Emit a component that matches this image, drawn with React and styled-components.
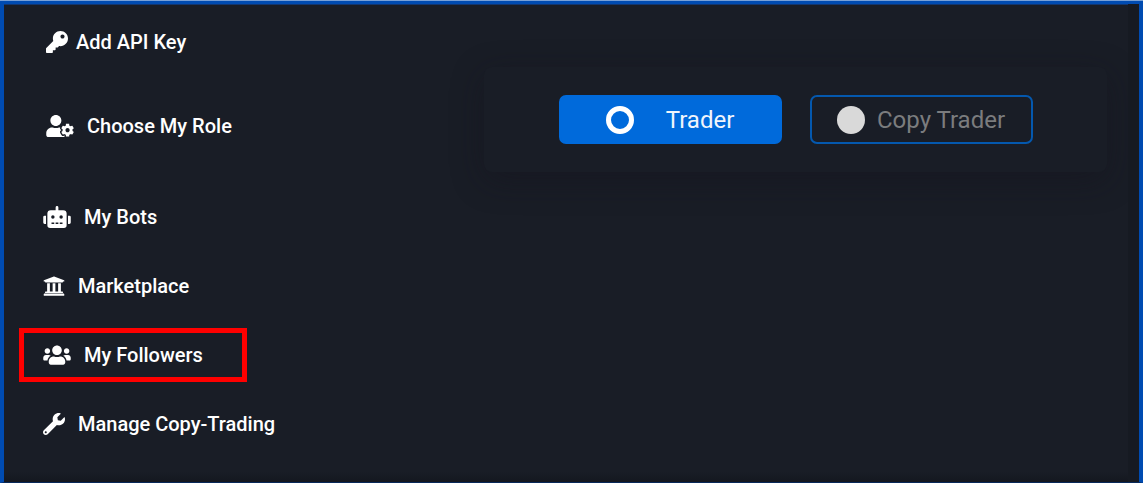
import React, { useState } from 'react'
import styled, { createGlobalStyle, css } from 'styled-components'
import {
  FaKey,
  FaRobot,
  FaUniversity,
  FaUserCog,
  FaUsers,
  FaWrench
} from 'react-icons/fa'

const bgColor = '#191d26'
const trackColor = '#161a22'
const frameColor = '#004bb1'
const primary = '#006adb'
const highlight = '#ff0000'

const GlobalStyle = createGlobalStyle`
  *, *::before, *::after {
    box-sizing: border-box;
  }
  body {
    margin: 0;
    border-top: 1px solid #78a0d6;
    background: ${bgColor};
    font-family: Roboto, 'Liberation Sans', sans-serif;
  }
`

const Frame = styled.div`
  display: grid;
  grid-template-columns: 480px 1fr 11px;
  min-height: calc(100vh - 1px);
  border: solid ${frameColor};
  border-width: 3px 4px 1px;
  border-bottom-color: #08295a;
  background: linear-gradient(to top, #14171f, ${bgColor} 10px);
  box-shadow: inset 0 1px 0 #12366f;
`
const Nav = styled.nav`
  display: flex;
  flex-direction: column;
  gap: 37px;
  padding: 11px 0 30px 15px;
`
const NavGroup = styled.ul`
  display: flex;
  flex-direction: column;
  list-style: none;
  margin: 0;
  ${props => css`
    gap: ${props.$gap}px;
    padding: 0 0 0 ${props.$indent || 0}px;
  `}
`
const NavLink = styled.a`
  display: inline-flex;
  align-items: center;
  height: 54px;
  padding: 0 39px 0 19px;
  border: 5px solid ${props => (props.$marked ? highlight : 'transparent')};
  color: #fff;
  font-size: 20px;
  font-weight: 500;
  line-height: 24px;
  text-decoration: none;
  white-space: nowrap;
  gap: ${props => (props.$tight ? 8 : 13)}px;

  svg {
    flex: none;
    width: ${props => (props.$wide ? 28 : 22)}px;
    height: 22px;
  }
`
const Main = styled.main`
  padding: 63px 21px 0 0;
`
const RoleCard = styled.form`
  display: flex;
  justify-content: center;
  gap: 28px;
  padding: 28px;
  border-radius: 8px;
  background: ${bgColor};
  box-shadow: 0 8px 32px rgba(20, 18, 28, 0.4);
`
const RoleOption = styled.label`
  display: flex;
  align-items: center;
  justify-content: center;
  flex: 0 1 223px;
  height: 49px;
  border: 2px solid #0458ae;
  border-radius: 7px;
  color: #7b7c7e;
  font-size: 24px;
  line-height: 28px;
  white-space: nowrap;
  cursor: pointer;
  gap: ${props => props.$gap}px;
  ${props =>
    props.$active &&
    css`
      border-color: ${primary};
      background: ${primary};
      color: #f0f5fc;
    `}
`
const Radio = styled.input`
  appearance: none;
  flex: none;
  width: 28px;
  height: 28px;
  margin: 0;
  border-radius: 50%;
  background: #d9d9d9;

  &:checked {
    border: 5px solid #fff;
    background: transparent;
  }
`
const Track = styled.div`
  background: ${trackColor};
`

const Item = ({ icon: Icon, children, ...props }) => (
  <li>
    <NavLink href="#" {...props}>
      <Icon aria-hidden="true" />
      {children}
    </NavLink>
  </li>
)

const roles = [
  { id: 'trader', label: 'Trader', gap: 32 },
  { id: 'copy-trader', label: 'Copy Trader', gap: 12 }
]

const App = () => {
  const [role, setRole] = useState('trader')

  return (
    <Frame>
      <GlobalStyle />
      <Nav>
        <NavGroup $gap={30} $indent={3}>
          <Item icon={FaKey} $tight>
            Add API Key
          </Item>
          <Item icon={FaUserCog} $wide>
            Choose My Role
          </Item>
        </NavGroup>
        <NavGroup $gap={15}>
          <Item icon={FaRobot} $wide>
            My Bots
          </Item>
          <Item icon={FaUniversity}>Marketplace</Item>
          <Item icon={FaUsers} $wide $marked>
            My Followers
          </Item>
          <Item icon={FaWrench}>Manage Copy-Trading</Item>
        </NavGroup>
      </Nav>
      <Main>
        <RoleCard>
          {roles.map(({ id, label, gap }) => (
            <RoleOption key={id} $gap={gap} $active={role === id}>
              <Radio
                type="radio"
                name="role"
                value={id}
                checked={role === id}
                onChange={() => setRole(id)}
              />
              {label}
            </RoleOption>
          ))}
        </RoleCard>
      </Main>
      <Track />
    </Frame>
  )
}

export default App
